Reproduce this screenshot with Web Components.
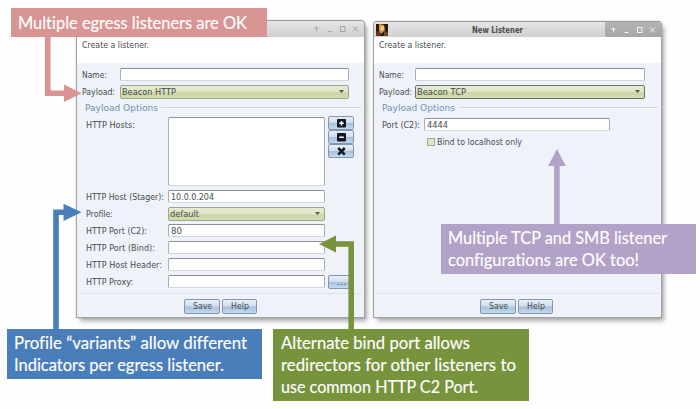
<!DOCTYPE html>
<html lang="en"><head><meta charset="utf-8"><title>New Listener</title>
<style>html,body{margin:0;background:#fefefe;width:700px;height:409px;overflow:hidden}</style></head><body>
<listener-slide></listener-slide>
<script>
const make = (name, html, setup) => customElements.define(name, class extends HTMLElement {
  connectedCallback() {
    if (this.shadowRoot) return;
    this.attachShadow({mode: 'open'});
    const a = (k, d = '') => this.getAttribute(k) ?? d;
    this.shadowRoot.innerHTML = typeof html === 'function' ? html(a) : html;
    if (setup) setup(this, a);
  }
});

// One line of text, condensed or widened to the width given in "w".
make('fit-text', a => `<style>:host{display:block;white-space:nowrap;width:${a('w')}px;flex:none}span{display:inline-block;transform-origin:0 50%}</style><span>${a('text')}</span>`,
  (el, a) => {
    const s = el.shadowRoot.querySelector('span');
    s.style.transform = `scaleX(${+a('w') / s.getBoundingClientRect().width})`;
  });

make('text-field', a => `<style>:host{display:flex;align-items:center;box-sizing:border-box;flex:none;width:${a('w')}px;height:${a('h', 13)}px;border:1px solid #a9adb4;border-top:1.5px solid #8c9098;border-bottom-color:#d3d7dd;border-radius:1.5px;background:#fff;padding-left:2px}</style><slot></slot>`);

make('combo-box', a => `<style>:host{display:flex;align-items:center;justify-content:space-between;box-sizing:border-box;flex:none;width:${a('w')}px;height:14px;border:1px solid ${a('edge', '#9ea48f')};border-radius:2px;background:linear-gradient(#e6ebd2,#dee4c4 48%,#ccd6a4 55%,#d3dcb0);padding:0 4px 0 1px}svg{display:block}</style><slot></slot><svg width="5" height="3"><path d="M0 0H5L2.5 3Z" fill="#555b45"/></svg>`);

make('push-button', a => `<style>:host{display:flex;align-items:center;justify-content:center;box-sizing:border-box;flex:none;width:${a('w', 26)}px;height:${a('h', 14)}px;border:1px solid #8496ad;border-radius:2px;background:linear-gradient(#e9f0f8,#cfdded 46%,#a9c1db 54%,#c2dbf2)}</style><slot></slot>`);

make('tool-glyph', a => {
  const shapes = {
    plus: '<rect width="9" height="8.6" rx="1" fill="#15191f"/><path d="M4.5 2V6.6M2.2 4.3H6.8" stroke="#fff" stroke-width="1.5"/>',
    minus: '<rect width="9" height="8.6" rx="1" fill="#15191f"/><path d="M2.2 4.3H6.8" stroke="#fff" stroke-width="1.5"/>',
    cross: '<path d="M1.2 1L7.8 7.6M7.8 1L1.2 7.6" stroke="#15191f" stroke-width="2.5"/>'
  };
  return `<style>:host,svg{display:block}</style><svg width="9" height="9">${shapes[a('kind')]}</svg>`;
});

make('form-row', a => `<style>:host{display:flex;align-items:center;height:${a('h', 17)}px;padding-left:${a('indent', 4)}px}:host>span{display:block;width:${a('label')}px;flex:none}</style><span><slot name="label"></slot></span><slot></slot>`);

make('option-group', a => `<style>:host{display:block}header{display:flex;align-items:center;gap:3px;height:16px;padding:0 1px 0 4px;color:#6d92b3}i{flex:1;height:1px;background:#cbd7e4;border-bottom:1px solid #f9fbfe}</style><header><fit-text text="Payload Options" w="73"></fit-text><i></i></header><slot></slot>`);

make('app-window', a => {
  const on = a('active') === '1', c = on ? '#f5f5f5' : '#a3a3a3';
  return `<style>
  :host{display:flex;flex-direction:column;box-sizing:border-box;width:289px;height:${a('h', 298)}px;border:1.5px solid #a0a2a4;border-top-color:#989898;border-radius:4px 4px 0 0;background:#eff3f9;box-shadow:3px 4px 5px -1px #0005,0 0 2px #0003;font:9.1px "DejaVu Sans",sans-serif;color:#484b4f;overflow:hidden}
  .bar{display:flex;align-items:center;justify-content:space-between;height:${a('bar', 16)}px;flex:none;background:linear-gradient(#e5e5e5,#d0d0d0);box-sizing:border-box}
  .bar b{color:#4c4c4c}.icon{width:13px;padding-left:2px}.ctl{display:flex;align-items:center;height:100%;box-sizing:border-box;padding:0 4px;border-radius:0 0 0 3px;${on ? 'background:linear-gradient(#b4b4b4,#a6a6a6)' : ''}}
  .gap{width:41px}svg{display:block}
  .intro{height:26px;flex:none;background:#fff;padding:2px 0 0 4.5px;box-sizing:border-box;line-height:12px}
  main{height:231px;flex:none;box-sizing:border-box;margin:0 2.5px;padding:3px 0 0 1px;border-bottom:1px solid #dce2eb}
  footer{display:flex;gap:2px;justify-content:center;padding:4.5px 0 0 0;margin-right:${a('foot', 0)}px}
  </style>
  <div class="bar"><span class="icon">${on ? '<svg width="12" height="12"><rect width="12" height="12" fill="#211b12"/><path d="M3 0L8 1L9 6L5 10L3 7Z" fill="#d99c36"/><path d="M5 2L8 3L7 7L5 6Z" fill="#f3d597"/><path d="M0 7L4 8L5 12H0Z" fill="#653021"/><path d="M8 6L12 9V12H8Z" fill="#6e4938"/></svg>' : ''}</span>${on ? '<span class="gap"></span><b><fit-text text="New Listener" w="51"></fit-text></b><span class="gap"></span>' : ''}
  <span class="ctl"><svg width="48" height="10" fill="none" stroke="${c}" stroke-width="1"><path d="M4.500 7.500V3M2.500 5L4.500 2.800L6.500 5M15.500 7.500H19.500M28.500 2.500H33V7.500H28.500ZM41 2.500L46 7.500M46 2.500L41 7.500"/></svg></span></div>
  <div class="intro"><fit-text text="Create a listener." w="67"></fit-text></div>
  <main><slot></slot></main>
  <footer><push-button w="36" h="15"><fit-text text="Save" w="19"></fit-text></push-button><push-button w="35" h="15"><fit-text text="Help" w="18"></fit-text></push-button></footer>`;
});

make('note-box', a => `<style>:host{display:flex;flex-direction:column;justify-content:center;box-sizing:border-box;background:${a('color')};color:#fff;padding:0 7px 0 ${a('pad', 7)}px;font:17px/21.8px Lato,sans-serif;font-variant-ligatures:none;-webkit-text-stroke:.15px #fff}</style><slot></slot>`);

make('note-arrows', `<style>:host,svg{display:block}</style><svg width="700" height="409" fill="none" stroke-width="5.6">
<path d="M47.700 36V93.300H66" stroke="#d99593"/><path d="M64 84.500L81.500 93.300L64 102Z" fill="#d99593"/>
<path d="M56 330V212.300H66" stroke="#4a7ebb"/><path d="M63.500 203.800L81.500 212.300L63.500 221Z" fill="#4a7ebb"/>
<path d="M351.200 330V244H334" stroke="#77933c"/><path d="M336 235.500L319 244L336 252.500Z" fill="#77933c"/>
<path d="M556.900 225V165" stroke="#b3a2c7"/><path d="M548.200 166L556.900 149L565.800 166Z" fill="#b3a2c7"/></svg>`);

const label = (t, w) => `<fit-text slot="label" text="${t}" w="${w}"></fit-text>`;
const txt = (t, w) => `<fit-text text="${t}" w="${w}"></fit-text>`;
const httpRow = (t, w, control) => `<form-row label="82.500">${label(t, w)}${control}</form-row>`;

make('listener-slide', `<style>
:host{display:block;position:relative;width:700px;height:409px;background:#fefefe}
app-window,note-box,note-arrows{position:absolute}
.one{left:76px;top:20px}.two{left:373px;top:21px}
.tools{display:flex;flex-direction:column;align-self:flex-start;margin-left:3px}
.dots{margin-left:3px}
.check{width:8px;height:8px;box-sizing:border-box;border:1px solid #a5a995;background:#dfe4cc;margin:0 2px 0 43px;flex:none}
note-arrows{left:0;top:0}
.pink{left:11px;top:8px;width:256px;height:29px}.blue{left:7px;top:329px;width:255px;height:50px}
.green{left:273px;top:329px;width:256px;height:72px}.purple{left:441px;top:224px;width:255px;height:50px}
</style>
<app-window class="one">
 <form-row label="38" h="17" indent="1">${label('Name:', 25)}<text-field w="229"></text-field></form-row>
 <form-row label="38" h="17" indent="1">${label('Payload:', 33)}<combo-box w="229">${txt('Beacon HTTP', 54)}</combo-box></form-row>
 <option-group>
  <form-row label="82.500" h="71" indent="5" class="hosts">${label('HTTP Hosts:', 49)}<text-field w="157" h="69"></text-field><div class="tools"><push-button><tool-glyph kind="plus"></tool-glyph></push-button><push-button><tool-glyph kind="minus"></tool-glyph></push-button><push-button><tool-glyph kind="cross"></tool-glyph></push-button></div></form-row>
 </option-group>
</app-window>
<app-window class="two" active="1" h="297" bar="15" foot="2"></app-window>
<note-box class="pink" color="#d99593">${txt('Multiple egress listeners are OK', 229)}</note-box>
<note-box class="blue" color="#4a7ebb">${txt('Profile “variants” allow different', 233)}${txt('Indicators per egress listener.', 210)}</note-box>
<note-box class="green" color="#77933c" pad="8">${txt('Alternate bind port allows', 189)}${txt('redirectors for other listeners to', 235)}${txt('use common HTTP C2 Port.', 197)}</note-box>
<note-box class="purple" color="#b3a2c7">${txt('Multiple TCP and SMB listener', 219)}${txt('configurations are OK too!', 191)}</note-box>
<note-arrows></note-arrows>`, el => {
  const r = el.shadowRoot, group = r.querySelector('.one option-group');
  const hosts = r.querySelector('.hosts');
  hosts.shadowRoot.querySelector('span').style.cssText = 'align-self:flex-start;padding-top:4px';
  group.insertAdjacentHTML('beforeend', `<div style="padding-left:1px;padding-top:1px">` +
    httpRow('HTTP Host (Stager):', 78, `<text-field w="157">${txt('10.0.0.204', 43)}</text-field>`) +
    httpRow('Profile:', 27, `<combo-box w="157">${txt('default', 29)}</combo-box>`) +
    httpRow('HTTP Port (C2):', 61, `<text-field w="157">${txt('80', 11)}</text-field>`) +
    httpRow('HTTP Port (Bind):', 69, `<text-field w="157"></text-field>`) +
    httpRow('HTTP Host Header:', 76, `<text-field w="157"></text-field>`) +
    httpRow('HTTP Proxy:', 47, `<text-field w="157"></text-field><push-button class="dots">${txt('...', 9)}</push-button>`) + `</div>`);
  r.querySelector('.two').innerHTML = `
   <form-row label="36.500" h="17" indent="1">${label('Name:', 25)}<text-field w="230"></text-field></form-row>
   <form-row label="36.500" h="17" indent="1">${label('Payload:', 33)}<combo-box w="230" edge="#6d7167">${txt('Beacon TCP', 49)}</combo-box></form-row>
   <option-group><form-row label="42" h="17">${label('Port (C2):', 38)}<text-field w="186">${txt('4444', 21)}</text-field></form-row>
   <form-row label="2" h="17"><span class="check"></span>${txt('Bind to localhost only', 85)}</form-row></option-group>`;
});
</script></body></html>
